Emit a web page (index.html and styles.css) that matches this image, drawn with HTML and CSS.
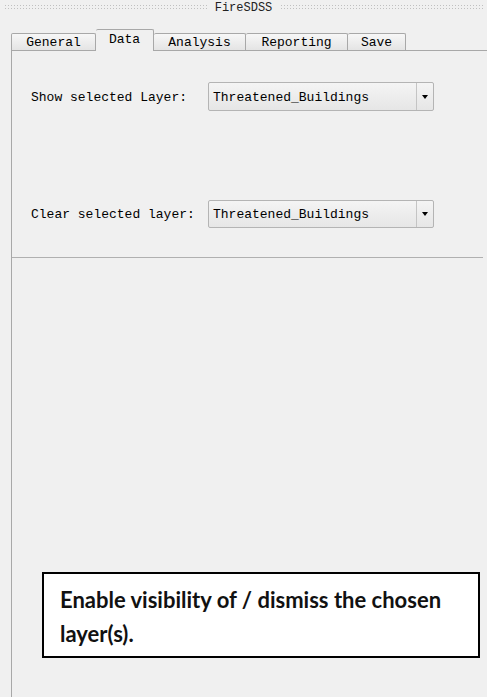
FILE: index.html
```html
<!DOCTYPE html>
<html>
<head>
<meta charset="utf-8">
<link rel="stylesheet" href="styles.css">
</head>
<body>
<div class="window">
  <div class="titlebar">
    <span class="dots"></span>
    <span class="title">FireSDSS</span>
    <span class="dots"></span>
  </div>
  <div class="tabs">
    <div class="tab t-general">General</div>
    <div class="tab t-data active">Data</div>
    <div class="tab t-analysis">Analysis</div>
    <div class="tab t-reporting">Reporting</div>
    <div class="tab t-save">Save</div>
  </div>
  <div class="panel">
    <div class="row row1">
      <span class="label">Show selected Layer:</span>
      <div class="combo"><span class="combo-text">Threatened_Buildings</span><span class="combo-btn"><span class="arrow"></span></span></div>
    </div>
    <div class="row row2">
      <span class="label">Clear selected layer:</span>
      <div class="combo"><span class="combo-text">Threatened_Buildings</span><span class="combo-btn"><span class="arrow"></span></span></div>
    </div>
    <div class="separator"></div>
  </div>
</div>
<div class="callout"><span class="line">Enable visibility of / dismiss the chosen</span><span class="line">layer(s).</span></div>
</body>
</html>
```
FILE: styles.css
```css
html, body {
  margin: 0;
  padding: 0;
  background: #f0f0f0;
  width: 487px;
  height: 697px;
  overflow: hidden;
}
body {
  position: relative;
  font-family: "Liberation Mono", "DejaVu Sans Mono", monospace;
  font-size: 13px;
  color: #000;
}
.window {
  display: flex;
  flex-direction: column;
  height: 697px;
}
.titlebar {
  display: flex;
  align-items: center;
  height: 16px;
  padding: 0 4px;
  gap: 8px;
}
.dots {
  flex: 1;
  height: 6px;
  margin-top: -2px;
  background-image: radial-gradient(circle, #c0c0c0 0.8px, transparent 1px);
  background-size: 3px 3px;
}
.title {
  font-size: 12px;
  color: #222;
  line-height: 16px;
}
.tabs {
  display: flex;
  align-items: flex-end;
  margin-top: 13px;
  padding-left: 11px;
  height: 21px;
}
.tab {
  box-sizing: border-box;
  height: 17px;
  border: 1px solid #a8a8a8;
  border-bottom: none;
  border-left: none;
  background: linear-gradient(#f7f7f7, #e4e4e4);
  text-align: center;
  line-height: 18px;
  border-radius: 2px 2px 0 0;
}
.t-general { width: 85px; border-left: 1px solid #a8a8a8; }
.t-data { width: 58px; }
.t-analysis { width: 92px; }
.t-reporting { width: 102px; }
.t-save { width: 58px; }
.tab.active {
  height: 22px;
  margin-bottom: -1px;
  background: #f0f0f0;
  line-height: 20px;
  position: relative;
  z-index: 1;
}
.panel {
  flex: 1;
  margin-left: 11px;
  border-top: 1px solid #a8a8a8;
  border-left: 1px solid #a8a8a8;
  display: flex;
  flex-direction: column;
}
.row {
  display: flex;
  align-items: center;
  padding-left: 19px;
}
.row1 { margin-top: 31px; }
.row2 { margin-top: 89px; }
.label {
  width: 177px;
  padding-top: 1px;
}
.combo {
  box-sizing: border-box;
  width: 226px;
  height: 29px;
  display: flex;
  border: 1px solid #b4b4b4;
  border-radius: 2px;
  background: linear-gradient(#f4f4f4, #e6e6e6);
}
.row2 .combo { height: 28px; }
.combo-text {
  flex: 1;
  padding-left: 4px;
  padding-top: 1px;
  display: flex;
  align-items: center;
}
.combo-btn {
  width: 16px;
  border-left: 1px solid #c4c4c4;
  display: flex;
  align-items: center;
  justify-content: center;
}
.arrow {
  width: 0;
  height: 0;
  border-left: 3px solid transparent;
  border-right: 3px solid transparent;
  border-top: 4px solid #000;
}
.separator {
  margin-top: 29px;
  margin-right: 4px;
  height: 1px;
  background: #b0b0b0;
}
.callout {
  position: absolute;
  left: 42px;
  top: 572px;
  width: 438px;
  height: 86px;
  box-sizing: border-box;
  border: 2px solid #000;
  background: #fff;
  font-family: Lato, "Open Sans", sans-serif;
  font-weight: bold;
  font-size: 22px;
  line-height: 34px;
  padding: 9px 6px 0 16px;
  color: #111;
  display: flex;
  flex-direction: column;
}
.line {
  white-space: nowrap;
}
```
